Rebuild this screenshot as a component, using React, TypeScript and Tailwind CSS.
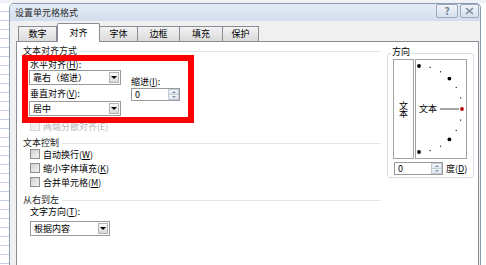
import React from 'react';

const Combo = ({ value, width }: { value: string; width: string }) => (
  <div className={`${width} h-[15px] flex items-stretch bg-white border border-[#9a9a9a]`}>
    <span className="flex-1 pl-[3px] leading-[13px]">{value}</span>
    <div className="w-[10px] my-[1px] mr-[1px] flex items-center justify-center border border-[#b4b4b4] bg-gradient-to-b from-[#fafafa] to-[#d9d9d9]">
      <div className="w-0 h-0 border-l-[3px] border-r-[3px] border-t-[3px] border-l-transparent border-r-transparent border-t-black" />
    </div>
  </div>
);

const Spin = ({ width }: { width: string }) => (
  <div className={`${width} h-[13px] flex items-stretch bg-white border border-[#9a9a9a]`}>
    <span className="flex-1 pl-[3px] leading-[11px]">0</span>
    <div className="w-[11px] flex flex-col">
      <div className="flex-1 flex items-center justify-center bg-gradient-to-b from-[#f4f7fa] to-[#dfe6ee] border border-[#c3ccd6]">
        <div className="w-0 h-0 border-l-[2px] border-r-[2px] border-b-[2px] border-l-transparent border-r-transparent border-b-[#7d93ab]" />
      </div>
      <div className="flex-1 flex items-center justify-center bg-gradient-to-b from-[#f4f7fa] to-[#dfe6ee] border border-t-0 border-[#c3ccd6]">
        <div className="w-0 h-0 border-l-[2px] border-r-[2px] border-t-[2px] border-l-transparent border-r-transparent border-t-[#7d93ab]" />
      </div>
    </div>
  </div>
);

const Check = ({ children, disabled }: { children: React.ReactNode; disabled?: boolean }) => (
  <div className={`h-[14px] flex items-center gap-[3px] pl-[7px] ${disabled ? 'text-[#b8b8b8]' : ''}`}>
    <div
      className={`w-[10px] h-[10px] border ${
        disabled
          ? 'border-[#d6d6d6] bg-[#f2f2f2]'
          : 'border-[#8e8f8f] bg-gradient-to-br from-[#cfcfcf] to-[#f4f4f4]'
      }`}
    />
    <span className="leading-[11px]">{children}</span>
  </div>
);

const Section = ({ title, className = '' }: { title: string; className?: string }) => (
  <div className={`h-[11px] flex items-center gap-[3px] ${className}`}>
    <span className="leading-[11px] text-[#1a1a1a]">{title}</span>
    <div className="flex-1 h-px mt-[1px] bg-[#e3e5e8]" />
  </div>
);

const Tab = ({ label, width, active }: { label: string; width: string; active?: boolean }) =>
  active ? (
    <div
      className={`${width} h-[19px] -mb-px relative z-10 flex items-center justify-center bg-white border border-b-0 border-[#898c95] rounded-t-[2px]`}
    >
      {label}
    </div>
  ) : (
    <div
      className={`${width} h-[15px] flex items-center justify-center bg-gradient-to-b from-[#f3f3f3] to-[#dadada] border border-b-0 border-[#898c95] -ml-px first:ml-0`}
    >
      {label}
    </div>
  );

const Dial = () => {
  const dots = [];
  for (let i = 0; i <= 12; i++) {
    const a = ((-90 + i * 15) * Math.PI) / 180;
    const x = 4 + 43 * Math.cos(a);
    const y = 50 + 43 * Math.sin(a);
    if (i === 6) dots.push(<circle key={i} cx={x} cy={y} r={1.9} fill="#c00000" />);
    else if (i % 3 === 0) dots.push(<circle key={i} cx={x} cy={y} r={1.9} fill="#000" />);
    else dots.push(<rect key={i} x={x - 0.6} y={y - 0.6} width={1.2} height={1.2} fill="#222" />);
  }
  return (
    <div className="w-[52px] h-[100px] relative flex items-center border border-[#a3a3a3] bg-white">
      <svg className="absolute inset-0" width="50" height="98" viewBox="1 1 50 98">
        <line x1="25" y1="50" x2="44" y2="50" stroke="#4a4a4a" strokeWidth="1" />
        {dots}
      </svg>
      <span className="pl-[3px] leading-[11px] -mt-[1px]">文本</span>
    </div>
  );
};

export default function App() {
  return (
    <div className="w-[486px] h-[265px] overflow-hidden bg-white flex flex-col text-[9px] text-black font-['Noto_Sans_CJK_SC',sans-serif] relative">
      <div className="h-[3px] shrink-0 bg-[#eef1f5]" />
      <div className="flex flex-1 min-h-0">
        <div className="w-[9px] shrink-0 bg-[repeating-linear-gradient(to_bottom,#ffffff_0px,#ffffff_8px,#c8d4e5_8px,#c8d4e5_9px)]" />
        <div className="w-[472px] shrink-0 flex flex-col bg-[#f0f0f0] border-l border-t border-r border-[#8c9bb1] rounded-t-[5px]">
          {/* title bar */}
          <div className="h-[17px] shrink-0 flex items-start bg-gradient-to-b from-[#e4ecf6] to-[#d2deed] rounded-t-[4px]">
            <span className="pl-[5px] self-center leading-[11px] text-[#2a2a2a]">设置单元格格式</span>
            <div className="flex-1" />
            <div className="w-[22px] h-[14px] flex items-center justify-center border border-[#9aa8ba] rounded-[2px] bg-gradient-to-b from-[#f0f4f9] to-[#d6e0ec] text-[#6f7f93] text-[10px] leading-none font-bold">
              ?
            </div>
            <div className="w-[19px] h-[14px] ml-[2px] mr-[1px] flex items-center justify-center border border-[#9aa8ba] rounded-[2px] bg-gradient-to-b from-[#f0f4f9] to-[#d6e0ec]">
              <svg width="9" height="8" viewBox="0 0 9 8">
                <path d="M1 1 L8 7 M8 1 L1 7" stroke="#7c8898" strokeWidth="1.6" />
              </svg>
            </div>
          </div>

          {/* body */}
          <div className="flex-1 flex flex-col pl-[6px] pr-[1px] min-h-0">
            <div className="h-[20px] shrink-0 flex items-end pl-[2px]">
              <Tab label="数字" width="w-[39px]" />
              <Tab label="对齐" width="w-[43px]" active />
              <Tab label="字体" width="w-[39px]" />
              <Tab label="边框" width="w-[43px]" />
              <Tab label="填充" width="w-[44px]" />
              <Tab label="保护" width="w-[37px]" />
            </div>

            <div className="flex-1 flex bg-white border-l border-t border-r border-[#898c95]">
              {/* left column */}
              <div className="w-[368px] shrink-0 flex flex-col pl-[6px] pr-[4px] pt-[3px]">
                <Section title="文本对齐方式" />
                <div className="mt-[3px] pl-[7px] leading-[11px]">
                  水平对齐(<u>H</u>):
                </div>
                <div className="flex items-start">
                  <div className="flex flex-col ml-[6px]">
                    <Combo value="靠右（缩进）" width="w-[92px]" />
                    <div className="mt-[3px] pl-[1px] leading-[11px]">
                      垂直对齐(<u>V</u>):
                    </div>
                    <Combo value="居中" width="w-[92px] mt-[2px]" />
                  </div>
                  <div className="flex flex-col ml-[10px]">
                    <div className="mt-[6px] leading-[11px]">
                      缩进(<u>I</u>):
                    </div>
                    <div className="mt-[1px]">
                      <Spin width="w-[49px]" />
                    </div>
                  </div>
                </div>
                <div className="mt-[3px]">
                  <Check disabled>两端分散对齐(E)</Check>
                </div>

                <Section title="文本控制" className="mt-[4px]" />
                <div className="-mt-[1px]">
                  <Check>
                    自动换行(<u>W</u>)
                  </Check>
                  <Check>
                    缩小字体填充(<u>K</u>)
                  </Check>
                  <Check>
                    合并单元格(<u>M</u>)
                  </Check>
                </div>

                <Section title="从右到左" className="mt-[5px]" />
                <div className="mt-[1px] pl-[7px] leading-[11px]">
                  文字方向(<u>T</u>):
                </div>
                <div className="mt-[4px] ml-[7px]">
                  <Combo value="根据内容" width="w-[80px]" />
                </div>
              </div>

              {/* orientation group */}
              <div className="flex-1 flex flex-col pt-[4px]">
                <span className="relative z-10 self-start ml-[6px] px-[1px] bg-white leading-[11px]">方向</span>
                <div className="w-[87px] h-[125px] ml-[2px] -mt-[4px] flex flex-col border border-[#d5dde5] rounded-[3px] pl-[5px] pt-[5px]">
                  <div className="flex gap-[1px]">
                    <div className="w-[21px] h-[100px] flex items-center justify-center border border-[#a3a3a3]">
                      <span className="[writing-mode:vertical-rl] [text-orientation:upright] leading-[11px] tracking-[-1px]">
                        文本
                      </span>
                    </div>
                    <Dial />
                  </div>
                  <div className="mt-[3px] ml-[1px] flex items-center">
                    <Spin width="w-[49px]" />
                    <span className="ml-[3px] leading-[11px]">
                      度(<u>D</u>)
                    </span>
                  </div>
                </div>
              </div>
            </div>
          </div>
        </div>
        <div className="flex-1 bg-white" />
      </div>

      {/* red annotation box */}
      <div className="absolute left-[22px] top-[55px] w-[172px] h-[68px] border-[6px] border-[#ff0000]" />
    </div>
  );
}
